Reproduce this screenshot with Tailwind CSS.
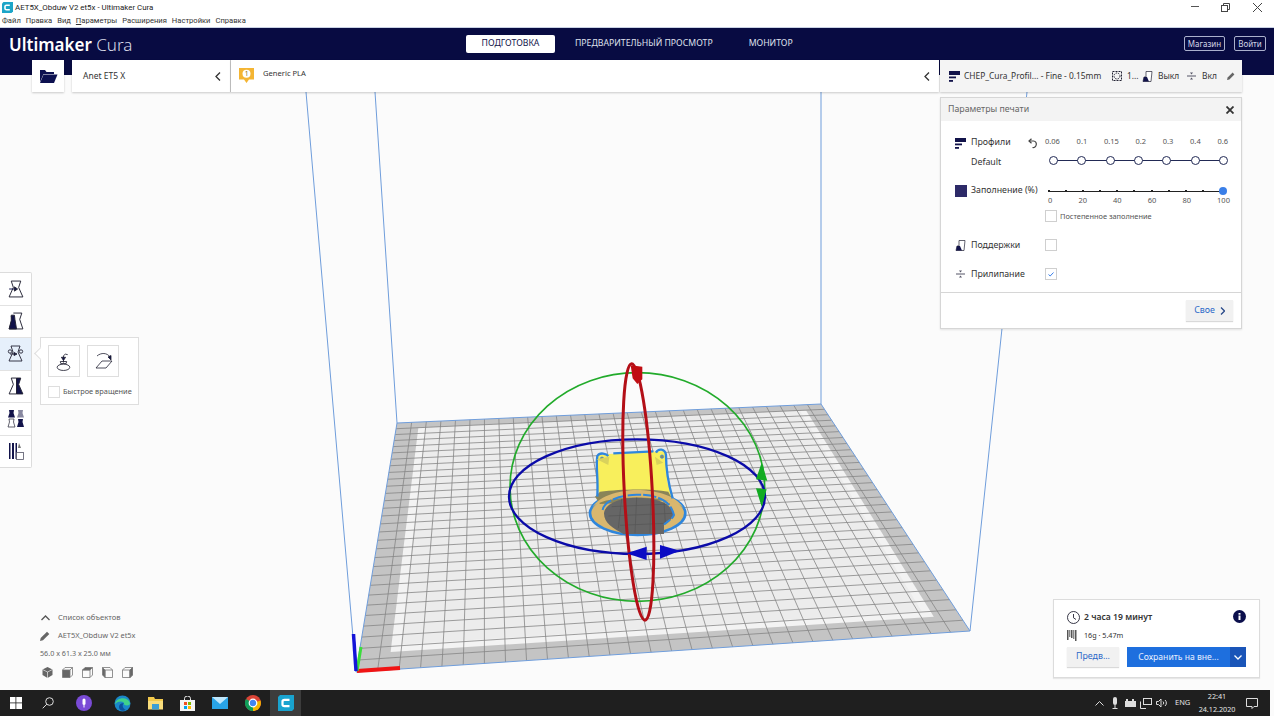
<!DOCTYPE html>
<html lang="ru">
<head>
<meta charset="UTF-8" />
<title>AET5X_Obduw V2 et5x - Ultimaker Cura</title>
<script src="https://cdn.jsdelivr.net/npm/@tailwindcss/browser@4"></script>
</head>
<body class="bg-white font-['Noto_Sans',sans-serif] overflow-hidden">
<div class="relative w-[1274px] h-[716px] overflow-hidden bg-[#fbfbfb] flex flex-col">

    <!-- 3d view -->
    <svg id="stage" class="absolute left-0 top-0" width="1274" height="716" viewBox="0 0 1274 716" fill="none">
        <g id="plate"></g>
        <g stroke="#6f9ddb" stroke-width="1">
            <line x1="356" y1="672" x2="306" y2="92"/>
            <line x1="397" y1="423" x2="375" y2="92"/>
            <line x1="821" y1="404" x2="821" y2="92"/>
            <line x1="970" y1="631" x2="1027" y2="92"/>
        </g>
        <!-- axes -->
        <g stroke-linecap="butt">
            <line x1="357" y1="671" x2="400" y2="668" stroke="#f01414" stroke-width="4"/>
            <line x1="357" y1="671" x2="361" y2="647" stroke="#3bdc3b" stroke-width="3"/>
            <line x1="356" y1="671" x2="353.500" y2="634" stroke="#1414d8" stroke-width="3.500"/>
        </g>
        <!-- model + rotate handles, numbers follow a 3x crop of the area -->
        <g transform="translate(480 350) scale(0.3333)">
            <ellipse cx="473" cy="490" rx="143" ry="65" fill="#d9b76e" stroke="#2f86dc" stroke-width="8"/>
            <path d="M352 315 L385 312 L520 305 L556 303 L562 395 L578 448 L360 445 L350 400Z" fill="#f8ef5c"/>
            <path d="M345 440 L360 425 C420 418 510 415 565 425 L578 450 L360 462Z" fill="#8a8458"/>
            <path d="M335 480 C345 440 420 420 470 420 C530 420 600 440 612 480 C600 430 340 430 335 480Z" fill="#d9b76e"/>
            <path d="M372 490 C375 460 420 443 470 443 C530 443 578 460 582 495 C575 510 560 518 552 522 L552 552 L430 552 C400 535 372 520 372 490Z" fill="#666666"/>
            <g stroke="#555" stroke-width="2">
                <path d="M395 470 L570 462 M385 498 L578 490 M420 526 L556 520"/>
                <path d="M425 447 L415 535 M470 443 L465 550 M512 446 L510 550 M552 452 L556 520"/>
            </g>
            <path d="M368 480 C372 452 420 436 470 434 C520 434 570 445 582 495 C575 510 560 516 552 524" stroke="#2f86dc" stroke-width="6" stroke-dasharray="40 6"/>
            <path d="M352 440 C355 380 347 350 352 318 C360 305 380 312 385 318 M400 310 L520 304 M528 308 C535 295 555 295 558 315 C558 350 562 390 578 445" stroke="#2f86dc" stroke-width="7"/>
            <circle cx="366" cy="326" r="5" fill="#8a8a60" stroke="#2f86dc" stroke-width="2"/>
            <circle cx="546" cy="320" r="5" fill="#8a8a60" stroke="#2f86dc" stroke-width="2"/>
            <path d="M350 328 L385 345 L388 320Z M525 320 L550 338 L530 345Z" fill="#d9d25c"/>
            <ellipse cx="472" cy="411" rx="382" ry="343" stroke="#22ab2b" stroke-width="5"/>
            <ellipse cx="471" cy="440" rx="384" ry="172" stroke="#0b0ba8" stroke-width="7"/>
            <ellipse cx="475" cy="426" rx="42" ry="385" transform="rotate(-3 475 426)" stroke="#b30f17" stroke-width="9"/>
            <path d="M452 46 L487 50 L487 88 L472 102 L458 85Z" fill="#c00d12"/>
            <path d="M845 338 L862 392 L828 388Z M828 415 L860 418 L845 470Z" fill="#12ab22"/>
            <path d="M500 590 L500 630 L440 610Z M540 585 L600 602 L540 626Z" fill="#0b0bc4"/>
        </g>
    </svg>

    <!-- window title -->
    <div class="relative h-[14px] flex items-center bg-white pl-[2px] font-['Roboto',sans-serif] text-[7.900px] text-[#222]">
        <svg class="mt-[1px]" width="11" height="11" viewBox="0 0 11 11"><path d="M1.500 0H11V9.500L9.500 11H0V1.500Z" fill="#1da5c8"/><path d="M7.800 3.200H4.500Q3 3.200 3 4.500V6.500Q3 7.800 4.500 7.800H7.800" stroke="#fff" stroke-width="1.600" fill="none"/></svg>
        <span class="ml-[2px] mt-[1px]">AET5X_Obduw V2 et5x - Ultimaker Cura</span>
        <div class="ml-auto flex items-center text-[#333]">
            <svg class="mr-[22px]" width="8" height="2"><rect width="8" height="1" y="0" fill="#555"/></svg>
            <svg class="mr-[23px]" width="9" height="9" viewBox="0 0 9 9" fill="none" stroke="#444"><rect x="0.500" y="2.500" width="6" height="6"/><path d="M2.500 2.500V.5H8.500V6.500H6.500"/></svg>
            <svg class="mr-[12px]" width="9" height="9" viewBox="0 0 9 9" stroke="#444"><path d="M0 0L9 9M9 0L0 9"/></svg>
        </div>
    </div>
    <div class="relative h-[14px] flex items-center gap-[5px] bg-white pl-[2px] font-['Roboto',sans-serif] text-[7.600px] text-[#333] border-b border-[#c9d2e4]">
        <span>Файл</span><span>Правка</span><span>Вид</span><span><u>П</u>араметры</span><span>Расширения</span><span>Настройки</span><span>Справка</span>
    </div>

    <!-- navy header -->
    <div class="relative h-[47px] bg-[#080b42] flex items-start pt-[7px] text-white">
        <div class="w-[466px] pl-[9px] text-[17px] leading-[20px] whitespace-nowrap"><span class="font-semibold">Ultimaker</span> <span class="font-light text-[#d9dbe8]">Cura</span></div>
        <div class="h-[18px] w-[89px] bg-white rounded-[2px] flex items-center justify-center text-[#12134a] text-[8.700px]">ПОДГОТОВКА</div>
        <div class="ml-[20px] h-[18px] flex items-center text-[8.700px] text-[#dfe0ec] whitespace-nowrap">ПРЕДВАРИТЕЛЬНЫЙ ПРОСМОТР</div>
        <div class="ml-[36px] h-[18px] flex items-center text-[8.700px] text-[#dfe0ec]">МОНИТОР</div>
        <div class="absolute left-[1184px] top-[8px] w-[41px] h-[15px] border border-[#aab0cc] rounded-[2px] flex items-center justify-center text-[8px] text-[#d4d6e6]">Магазин</div>
        <div class="absolute left-[1234px] top-[8px] w-[32px] h-[15px] border border-[#aab0cc] rounded-[2px] flex items-center justify-center text-[8px] text-[#d4d6e6]">Войти</div>
    </div>

    <!-- stage menu, hangs over the header -->
    <div class="relative -mt-[15px] ml-[32px] h-[32px] flex">
        <div class="w-[32px] h-[32px] bg-white shadow-[0_1px_2px_rgba(0,0,0,0.2)] flex items-center justify-center">
            <svg width="19" height="15" viewBox="0 0 19 15"><path d="M1 13V1H6L7.500 3H15V5H4.500Z" fill="#0d1150"/><path d="M1 14H15L18.500 5.500H4.500Z" fill="#0d1150"/></svg>
        </div>
        <div class="ml-[8px] w-[159px] bg-white flex items-center pl-[11px] text-[8.500px] text-[#333] shadow-[0_1px_2px_rgba(0,0,0,0.2)] border-r border-[#c8c8c8]">
            <span>Anet ET5 X</span>
            <svg class="ml-auto mr-[9px]" width="6" height="9" viewBox="0 0 6 9" fill="none" stroke="#333" stroke-width="1.300"><path d="M5 .5L1 4.500L5 8.500"/></svg>
        </div>
        <div class="w-[708px] bg-white flex items-start pl-[7px] text-[7.600px] text-[#333] shadow-[0_1px_2px_rgba(0,0,0,0.2)]">
            <svg class="mt-[7px]" width="17" height="17" viewBox="0 0 17 17"><path d="M1 1H16V12.500H11L8.500 16L6 12.500H1Z" fill="#f4b533"/><circle cx="8.500" cy="6.800" r="4" fill="#fff"/><text x="8.500" y="9.200" text-anchor="middle" font-size="6.500" fill="#8a6a10" font-family="Noto Sans">1</text></svg>
            <span class="ml-[8px] mt-[8px]">Generic PLA</span>
            <svg class="ml-auto mr-[9px] mt-[12px]" width="6" height="9" viewBox="0 0 6 9" fill="none" stroke="#333" stroke-width="1.300"><path d="M5 .5L1 4.500L5 8.500"/></svg>
        </div>
        <div class="ml-px w-[302px] bg-[#f4f4f4] flex items-center pl-[9px] text-[8.400px] text-[#333] shadow-[0_1px_2px_rgba(0,0,0,0.2)] whitespace-nowrap">
            <svg width="11" height="11" viewBox="0 0 11 11" fill="#12134a"><rect width="11" height="4"/><rect y="5.500" width="7" height="1.800"/><rect y="9" width="4" height="1.800"/></svg>
            <span class="ml-[4px] w-[148px]">CHEP_Cura_Profil... - Fine - 0.15mm</span>
            <svg width="10" height="10" viewBox="0 0 10 10" fill="none" stroke="#223" stroke-width="1"><rect x=".5" y=".5" width="9" height="9" stroke-dasharray="2 1"/><circle cx="5" cy="5" r="3" stroke-dasharray="1.500 1"/></svg>
            <span class="ml-[5px] w-[11px]">1...</span>
            <svg class="ml-[4px]" width="11" height="11" viewBox="0 0 11 11"><path d="M4 .5H10L9 10.500H1L2 6H4Z" fill="#fff" stroke="#223" stroke-width=".7"/><path d="M1 10.500L2 6H5L7 10.500Z" fill="#12134a"/></svg>
            <span class="ml-[5px] w-[22px]">Выкл</span>
            <svg class="ml-[7px]" width="9" height="10" viewBox="0 0 9 10" fill="#556"><rect y="4.500" width="9" height="1"/><path d="M4.500 3.500L3 1.500H6Z M4.500 6.500L3 8.500H6Z"/></svg>
            <span class="ml-[6px] w-[16px]">Вкл</span>
            <svg class="ml-[9px]" width="8" height="8" viewBox="0 0 8 8" fill="#666"><path d="M0 8L.6 5.600L5.600 .6L7.400 2.400L2.400 7.400Z"/></svg>
        </div>
    </div>

    <!-- print settings -->
    <div class="absolute left-[940px] top-[97px] w-[302px] h-[232px] bg-white border border-[#d6d6d6] shadow-[0_1px_2px_rgba(0,0,0,0.1)] flex flex-col text-[#333]">
        <div class="h-[23px] shrink-0 bg-[#f3f3f3] flex items-center justify-between px-[7px] text-[8.800px] text-[#666]">
            <span>Параметры печати</span>
            <svg width="8" height="8" viewBox="0 0 8 8" stroke="#333" stroke-width="1.800"><path d="M.5 .5L7.500 7.500M7.500 .5L.5 7.500"/></svg>
        </div>
        <div class="flex-1 relative pl-[14px] pt-[15px]">
            <div class="flex items-center h-[14px]">
                <svg class="w-[11px]" width="11" height="11" viewBox="0 0 11 11" fill="#12134a"><rect width="11" height="4"/><rect y="5.500" width="7" height="1.800"/><rect y="9" width="4" height="1.800"/></svg>
                <span class="ml-[5px] w-[56px] text-[8.800px]">Профили</span>
                <svg width="11" height="11" viewBox="0 0 11 11" fill="none" stroke="#444" stroke-width="1.200"><path d="M3 3H6.500A3.200 3.200 0 1 1 5.500 9.500"/><path d="M4.500 .8L2 3L4.500 5.200"/></svg>
                <div class="ml-[7px] w-[183px] flex justify-between text-[7.500px] text-[#555] -mt-[2px]">
                    <span>0.06</span><span>0.1</span><span>0.15</span><span>0.2</span><span>0.3</span><span>0.4</span><span>0.6</span>
                </div>
            </div>
            <div class="flex items-center h-[16px] mt-[5px]">
                <span class="ml-[16px] w-[78px] text-[8.800px]">Default</span>
                <div class="relative -mt-[6px] w-[179px] flex justify-between">
                    <div class="absolute left-[2px] right-[2px] top-[4px] h-[1.500px] bg-[#222a55]"></div>
                    <i class="relative w-[9px] h-[9px] rounded-full bg-white border border-[#222a55]"></i>
                    <i class="relative w-[9px] h-[9px] rounded-full bg-white border border-[#222a55]"></i>
                    <i class="relative w-[9px] h-[9px] rounded-full bg-white border border-[#222a55]"></i>
                    <i class="relative w-[9px] h-[9px] rounded-full bg-white border border-[#222a55]"></i>
                    <i class="relative w-[9px] h-[9px] rounded-full bg-white border border-[#222a55]"></i>
                    <i class="relative w-[9px] h-[9px] rounded-full bg-white border border-[#222a55]"></i>
                    <i class="relative w-[9px] h-[9px] rounded-full bg-white border border-[#222a55]"></i>
                </div>
            </div>
            <div class="flex items-center h-[14px] mt-[13px]">
                <div class="w-[12px] h-[12px] bg-[#2d2a68]"></div>
                <span class="ml-[4px] w-[77px] text-[8.800px] whitespace-nowrap">Заполнение (%)</span>
                <div class="relative w-[177px] h-[8px] flex justify-between items-center">
                    <div class="absolute left-0 right-0 top-[3.500px] h-px bg-[#222]"></div>
                    <i class="relative w-[2px] h-[2px] bg-[#222]"></i><i class="relative w-[2px] h-[2px] bg-[#222]"></i><i class="relative w-[2px] h-[2px] bg-[#222]"></i><i class="relative w-[2px] h-[2px] bg-[#222]"></i><i class="relative w-[2px] h-[2px] bg-[#222]"></i><i class="relative w-[2px] h-[2px] bg-[#222]"></i><i class="relative w-[2px] h-[2px] bg-[#222]"></i><i class="relative w-[2px] h-[2px] bg-[#222]"></i><i class="relative w-[2px] h-[2px] bg-[#222]"></i><i class="relative w-[2px] h-[2px] bg-[#222]"></i>
                    <i class="relative w-[8px] h-[8px] -mr-[2px] rounded-full bg-[#3a7fe8]"></i>
                </div>
            </div>
            <div class="ml-[93px] mt-[-3px] w-[182px] flex justify-between text-[7.500px] text-[#555]">
                <span>0</span><span>20</span><span>40</span><span>60</span><span>80</span><span>100</span>
            </div>
            <div class="ml-[90px] mt-[4px] flex items-center">
                <div class="w-[12px] h-[12px] border border-[#cfcfcf]"></div>
                <span class="ml-[3px] text-[7.400px] text-[#555] whitespace-nowrap">Постепенное заполнение</span>
            </div>
            <div class="flex items-center h-[12px] mt-[17px]">
                <svg class="w-[11px]" width="11" height="11" viewBox="0 0 11 11"><path d="M4 .5H10L9 10.500H1L2 6H4Z" fill="#fff" stroke="#223" stroke-width=".7"/><path d="M1 10.500L2 6H5L7 10.500Z" fill="#12134a"/></svg>
                <span class="ml-[5px] w-[74px] text-[8.800px]">Поддержки</span>
                <div class="w-[12px] h-[12px] border border-[#cfcfcf]"></div>
            </div>
            <div class="flex items-center h-[12px] mt-[17px]">
                <svg class="w-[11px]" width="9" height="10" viewBox="0 0 9 10" fill="#556"><rect y="4.500" width="9" height="1"/><path d="M4.500 3.500L3 1.500H6Z M4.500 6.500L3 8.500H6Z"/></svg>
                <span class="ml-[5px] w-[74px] text-[8.800px]">Прилипание</span>
                <div class="w-[12px] h-[12px] border border-[#cfcfcf] flex items-center justify-center">
                    <svg width="6" height="5" viewBox="0 0 6 5" fill="none" stroke="#3a7fe8" stroke-width="1"><path d="M.5 2.500L2.200 4L5.500 .5"/></svg>
                </div>
            </div>
            <div class="absolute left-0 right-0 bottom-[35px] h-px bg-[#d6d6d6]"></div>
            <div class="absolute right-[8px] bottom-[7px] w-[47px] h-[21px] bg-[#f1f1f1] shadow-[0_1px_1px_rgba(0,0,0,0.15)] flex items-center justify-center gap-[5px] text-[8.800px] text-[#2a68c8]">
                <span>Свое</span>
                <svg width="5" height="8" viewBox="0 0 5 8" fill="none" stroke="#2a4a8a" stroke-width="1.300"><path d="M1 .5L4.500 4L1 7.500"/></svg>
            </div>
        </div>
    </div>

    <!-- left toolbar -->
    <div class="absolute left-0 top-[272px] w-[32px] h-[196px] bg-white border border-l-0 border-[#dcdcdc] rounded-r-[2px] flex flex-col divide-y divide-[#e2e2e2]">
        <div class="flex-1 flex items-center justify-center">
            <svg width="16" height="18" viewBox="0 0 15 17" fill="none" stroke="#223" stroke-width=".9"><path d="M3 1H12L10 7L14 16H1L5 7Z"/><path d="M1 8.500H7" stroke="#12134a"/><path d="M6 6.500L9 8.500L6 10.500Z" fill="#12134a"/></svg>
        </div>
        <div class="flex-1 flex items-center justify-center">
            <svg width="16" height="18" viewBox="0 0 15 17" fill="none" stroke="#223" stroke-width=".9"><path d="M5 1H13L11 7L14 16H1L4 7L3 4"/><path d="M3 3H6L6.500 7L8 16H1L3 8Z" fill="#12134a"/></svg>
        </div>
        <div class="flex-1 flex items-center justify-center bg-[#e6f0fb]">
            <svg width="17" height="17" viewBox="0 0 17 17" fill="none" stroke="#223" stroke-width=".9"><path d="M4 1H13L11 7L15 16H2L6 7Z"/><circle cx="3" cy="6.500" r="1.700"/><circle cx="14" cy="6.500" r="1.700"/><path d="M3 9H8"/><path d="M7 7.500L10 9L7 10.500Z" fill="#12134a"/></svg>
        </div>
        <div class="flex-1 flex items-center justify-center">
            <svg width="16" height="18" viewBox="0 0 15 17" fill="none" stroke="#223" stroke-width=".9"><path d="M3 1H8V16H1L5 7Z"/><path d="M8 1H12L10 7L14 16H8Z" fill="#12134a"/></svg>
        </div>
        <div class="flex-1 flex items-center justify-center">
            <svg width="18" height="19" viewBox="0 0 17 19"><g fill="#12134a"><path d="M1.500 1H6.500L6 4L7.500 8.500H.5L2 4Z"/><path d="M10.500 10H15.500L15 13L16.500 18H9.500L11 13Z"/></g><path d="M10.500 1H15.500L15 4L16.500 8.500H9.500L11 4Z" fill="#8888a0"/><path d="M1.500 10H6.500L6 13L7.500 18H.5L2 13Z" fill="#fff" stroke="#223" stroke-width=".7"/></svg>
        </div>
        <div class="flex-1 flex items-center justify-center">
            <svg width="16" height="18" viewBox="0 0 16 18"><g fill="#12134a"><rect x="1" y="1" width="1.500" height="16"/><rect x="4" y="1" width="2" height="16"/><rect x="7.500" y="1" width="1.500" height="16"/></g><path d="M11 1L13 6H10Z" fill="#777"/><rect x="8.500" y="10.500" width="7" height="7" fill="#fff" stroke="#556" stroke-width=".8"/></svg>
        </div>
    </div>

    <!-- rotate popup -->
    <div class="absolute left-[40px] top-[337px] w-[99px] h-[68px] bg-white border border-[#dedede] flex flex-col pl-[7px] pt-[7px]">
        <div class="flex gap-[7px]">
            <div class="w-[32px] h-[32px] border border-[#dedede] flex items-center justify-center">
                <svg width="18" height="19" viewBox="0 0 17 18" fill="none" stroke="#223" stroke-width=".8"><path d="M5 9H11L10.500 11H5.500Z"/><ellipse cx="8" cy="14.500" rx="6" ry="3"/><path d="M8 10V3.500A3 3 0 0 1 12 2.500"/><path d="M6 5L8 8L10 5Z" fill="#12134a"/></svg>
            </div>
            <div class="w-[32px] h-[32px] border border-[#dedede] flex items-center justify-center">
                <svg width="19" height="18" viewBox="0 0 19 18" fill="none" stroke="#223" stroke-width=".8"><path d="M3 4C7 .5 13 .5 16 5"/><path d="M14 5L17 8L17 3.500Z" fill="#12134a"/><path d="M8 9H18L12 16H2Z"/></svg>
            </div>
        </div>
        <div class="flex items-center mt-[9px]">
            <div class="w-[12px] h-[12px] border border-[#dedede]"></div>
            <span class="ml-[3px] text-[7.400px] text-[#555] whitespace-nowrap">Быстрое вращение</span>
        </div>
    </div>
    <div class="absolute left-[35.500px] top-[349px] w-[9px] h-[9px] rotate-45 bg-white border-l border-b border-[#dedede]"></div>

    <!-- object list -->
    <div class="absolute left-[40px] top-[611px] w-[120px] text-[#666]">
        <div class="flex items-center h-[14px] text-[7.600px]">
            <svg class="ml-[1px]" width="9" height="6" viewBox="0 0 9 6" fill="none" stroke="#555" stroke-width="1.300"><path d="M.5 5L4.500 1L8.500 5"/></svg>
            <span class="ml-[8px] whitespace-nowrap">Список объектов</span>
        </div>
        <div class="flex items-center h-[14px] mt-[4px] text-[7.400px]">
            <svg width="10" height="10" viewBox="0 0 10 10" fill="#666"><path d="M0 10L.7 7L7 .7L9.300 3L3 9.300Z"/></svg>
            <span class="ml-[8px] whitespace-nowrap">AET5X_Obduw V2 et5x</span>
        </div>
        <div class="mt-[3px] h-[14px] flex items-center text-[7.200px] whitespace-nowrap">56.0 x 61.3 x 25.0 мм</div>
        <div class="mt-[7px] ml-[2px] flex gap-[9px]">
            <svg width="11" height="11" viewBox="0 0 11 11"><path d="M5.500 0L10.500 2.500V8L5.500 11L.5 8V2.500Z" fill="#666"/><path d="M.5 2.500L5.500 5L10.500 2.500M5.500 5V11" stroke="#fff" stroke-width=".6" fill="none"/></svg>
            <svg width="11" height="11" viewBox="0 0 11 11" fill="none" stroke="#777" stroke-width=".8"><path d="M.5 3H8V10.500H.5Z" fill="#666"/><path d="M.5 3L3 .5H10.500L8 3M10.500 .5V8L8 10.500"/></svg>
            <svg width="11" height="11" viewBox="0 0 11 11" fill="none" stroke="#777" stroke-width=".8"><path d="M.5 3H8V10.500H.5Z"/><path d="M.5 3L3 .5H10.500L8 3Z" fill="#666"/><path d="M10.500 .5V8L8 10.500"/></svg>
            <svg width="11" height="11" viewBox="0 0 11 11" fill="none" stroke="#777" stroke-width=".8"><path d="M.5 .5L3 3V10.500L.5 8Z" fill="#666"/><path d="M.5 .5H8L10.500 3V10.500H3V3H10.500"/></svg>
            <svg width="11" height="11" viewBox="0 0 11 11" fill="none" stroke="#777" stroke-width=".8"><path d="M.5 3H8V10.500H.5Z"/><path d="M.5 3L3 .5H10.500V8L8 10.500V3L10.500 .5" /><path d="M8 3L10.500 .5V8L8 10.500Z" fill="#666"/></svg>
        </div>
    </div>

    <!-- print estimate -->
    <div class="absolute left-[1053px] top-[599px] w-[207px] h-[79px] bg-white border border-[#dcdcdc] shadow-[0_1px_1px_rgba(0,0,0,0.08)] pl-[13px] pt-[10px] text-[#333]">
        <div class="flex items-center h-[14px]">
            <svg width="13" height="13" viewBox="0 0 13 13" fill="none" stroke="#223" stroke-width=".9"><circle cx="6.500" cy="6.500" r="6"/><path d="M6.500 3V6.800L9 8.500"/></svg>
            <span class="ml-[4px] text-[8.600px] font-semibold whitespace-nowrap">2 часа 19 минут</span>
        </div>
        <svg class="absolute left-[179px] top-[10px]" width="13" height="13" viewBox="0 0 13 13"><circle cx="6.500" cy="6.500" r="6.500" fill="#0b0f4c"/><rect x="5.500" y="5.500" width="2" height="4.500" fill="#fff"/><rect x="5.500" y="3" width="2" height="1.700" fill="#fff"/></svg>
        <div class="flex items-center h-[12px] mt-[5px]">
            <svg width="11" height="11" viewBox="0 0 11 11" fill="#555"><rect y="0" width="1.500" height="10"/><rect x="2.300" y="0" width="1" height="7"/><rect x="4" y="0" width="1.500" height="8"/><rect x="6.300" y="0" width="1" height="9"/><rect x="8" y="0" width="1.500" height="11"/></svg>
            <span class="ml-[6px] text-[7.200px] whitespace-nowrap">16g · 5.47m</span>
        </div>
        <div class="flex mt-[6px]">
            <div class="w-[52px] h-[20px] bg-[#f1f1f1] shadow-[0_1px_1px_rgba(0,0,0,0.15)] flex items-center justify-center text-[8.800px] text-[#2a68c8]">Предв...</div>
            <div class="ml-[8px] w-[103px] h-[20px] bg-[#1e6fde] flex items-center justify-center text-[8.600px] text-[#e8f0ff] whitespace-nowrap">Сохранить на вне...</div>
            <div class="w-[16px] h-[20px] bg-[#1a55b8] flex items-center justify-center">
                <svg width="8" height="5" viewBox="0 0 8 5" fill="none" stroke="#fff" stroke-width="1.300"><path d="M.5 .5L4 4L7.500 .5"/></svg>
            </div>
        </div>
    </div>

    <!-- taskbar -->
    <div class="absolute left-0 top-[690px] w-[1270px] h-[26px] bg-[#1f1f1f] flex items-center text-[#e6e6e6]">
        <svg class="ml-[10px]" width="12" height="12" viewBox="0 0 12 12" fill="#fff"><rect width="5.500" height="5.500"/><rect x="6.300" width="5.700" height="5.500"/><rect y="6.300" width="5.500" height="5.700"/><rect x="6.300" y="6.300" width="5.700" height="5.700"/></svg>
        <svg class="ml-[20px]" width="12" height="12" viewBox="0 0 12 12" fill="none" stroke="#ddd" stroke-width="1"><circle cx="7.500" cy="4.500" r="3.800"/><path d="M4.800 7.200L.7 11.300"/></svg>
        <svg class="ml-[22px]" width="16" height="16" viewBox="0 0 16 16"><circle cx="8" cy="8" r="8" fill="#7a4bd6"/><rect x="6.500" y="3.500" width="3" height="6.500" rx="1.500" fill="#fff"/><path d="M8 10V12.500" stroke="#fff"/></svg>
        <svg class="ml-[21.500px]" width="17" height="17" viewBox="0 0 17 17"><circle cx="8.500" cy="8.500" r="8" fill="#1a87c9"/><path d="M1 9C2 2 14 1 16 8C16 11 12 11 10 9.500C11 6 5 5 1 9Z" fill="#3fd08b"/><path d="M5 12C5 9 8 7.500 10 8.500C8 9 8 13 12 15C8 17 5 15 5 12Z" fill="#0c4f9c"/></svg>
        <svg class="ml-[17px]" width="15" height="14" viewBox="0 0 15 14"><path d="M0 1H6L7 3H15V13H0Z" fill="#f2c94c"/><rect y="5" width="15" height="8.500" fill="#f9dd7c"/><rect x="4" y="8" width="7" height="5.500" fill="#3d9fd6"/></svg>
        <svg class="ml-[17px]" width="15" height="15" viewBox="0 0 15 15"><path d="M0 4H15V15H0Z" fill="#f5f5f5"/><path d="M4.500 4V2.500A3 2.500 0 0 1 10.500 2.500V4" stroke="#eee" fill="none"/><rect x="4" y="6" width="3" height="3" fill="#f25022"/><rect x="8" y="6" width="3" height="3" fill="#7fba00"/><rect x="4" y="10" width="3" height="3" fill="#00a4ef"/><rect x="8" y="10" width="3" height="3" fill="#ffb900"/></svg>
        <svg class="ml-[17.500px]" width="16" height="12" viewBox="0 0 16 12"><rect width="16" height="12" fill="#29a3e6"/><path d="M0 0L8 7L16 0Z" fill="#bfe6fb"/></svg>
        <svg class="ml-[17px]" width="16" height="16" viewBox="0 0 16 16"><circle cx="8" cy="8" r="8" fill="#db4437"/><path d="M8 8L15.500 5.500A8 8 0 0 1 8 16Z" fill="#f4b400"/><path d="M8 8L8 16A8 8 0 0 1 1 4Z" fill="#0f9d58"/><circle cx="8" cy="8" r="3.800" fill="#4285f4" stroke="#fff" stroke-width="1.200"/></svg>
        <div class="ml-[9px] w-[31px] h-full bg-[#3c3c3c] flex items-center justify-center">
            <svg width="16" height="16" viewBox="0 0 16 16"><path d="M2 0H16V14L14 16H0V2Z" fill="#19a3cf"/><path d="M11.500 4.800H6.500Q4.500 4.800 4.500 6.500V9.500Q4.500 11.200 6.500 11.200H11.500" stroke="#fff" stroke-width="2.200" fill="none"/></svg>
        </div>
        <div class="ml-auto flex items-center pr-[12px]">
            <svg width="9" height="5" viewBox="0 0 9 5" fill="none" stroke="#ddd"><path d="M.5 4.500L4.500 .5L8.500 4.500"/></svg>
            <svg class="ml-[7.500px]" width="8" height="12" viewBox="0 0 8 12" fill="#ddd"><rect x="2" width="4" height="8" rx="2"/><rect x="3.500" y="8" width="1" height="3"/><rect x="1.500" y="11" width="5" height="1"/></svg>
            <svg class="ml-[6px]" width="12" height="8" viewBox="0 0 12 8" fill="#ddd"><rect y="2" width="11" height="6"/><rect x="1" y="0" width="2" height="2"/><rect x="7" y="0" width="2" height="2"/></svg>
            <svg class="ml-[3px]" width="12" height="11" viewBox="0 0 12 11" fill="none" stroke="#ddd"><rect x="3.500" y=".5" width="8" height="6"/><path d="M.5 3.500V10.500M.5 10.500H6"/></svg>
            <svg class="ml-[4px]" width="12" height="10" viewBox="0 0 12 10" fill="none" stroke="#ddd"><path d="M.5 3.500H2.500L5 1V9L2.500 6.500H.5Z"/><path d="M7 3.500A2 2 0 0 1 7 6.500M9 2A4 4 0 0 1 9 8"/></svg>
            <span class="ml-[7px] w-[16px] text-[7.500px] whitespace-nowrap">ENG</span>
            <div class="ml-[6px] w-[40px] flex flex-col items-center text-[7.200px] leading-[13px]"><span>22:41</span><span>24.12.2020</span></div>
            <svg class="ml-[9px]" width="12" height="11" viewBox="0 0 12 11" fill="none" stroke="#ddd"><path d="M.5 .5H11.500V8.500H8L6 10.500V8.500H.5Z"/></svg>
        </div>
    </div>
</div>

<script>
    // bed corners as seen on screen: far left, far right, near right, near left
    function homography(p) {
        const [a, b, c, d] = p;
        const dx1 = b[0] - c[0], dx2 = d[0] - c[0], sx = a[0] - b[0] + c[0] - d[0];
        const dy1 = b[1] - c[1], dy2 = d[1] - c[1], sy = a[1] - b[1] + c[1] - d[1];
        const den = dx1 * dy2 - dx2 * dy1;
        const g = (sx * dy2 - dx2 * sy) / den, h = (dx1 * sy - sx * dy1) / den;
        const m = [b[0] - a[0] + g * b[0], d[0] - a[0] + h * d[0], a[0], b[1] - a[1] + g * b[1], d[1] - a[1] + h * d[1], a[1], g, h];
        return (u, v) => {
            const w = m[6] * u + m[7] * v + 1;
            return [(m[0] * u + m[1] * v + m[2]) / w, (m[3] * u + m[4] * v + m[5]) / w];
        };
    }
    const map = homography([[397, 423], [821, 404], [970, 631], [356, 672]]);
    const quad = (u0, v0, u1, v1) => [map(u0, v0), map(u1, v0), map(u1, v1), map(u0, v1)].map(q => q.map(n => n.toFixed(1)).join(',')).join(' ');
    let svg = '';
    svg += `<polygon points="${quad(0, 0, 1, 1)}" fill="#c4c4c4"/>`;
    svg += `<polygon points="${quad(0.05, 0.035, 0.955, 0.95)}" fill="#f3f3f3"/>`;
    svg += `<polygon points="${quad(0.065, 0.035, 0.94, 0.93)}" fill="#ececec"/>`;
    const count = 30;
    for (let i = 1; i < count; i++) {
        const t = i / count;
        const a = map(t, 0), b = map(t, 1), c = map(0, t), d = map(1, t);
        svg += `<line x1="${a[0]}" y1="${a[1]}" x2="${b[0]}" y2="${b[1]}" stroke="#858585" stroke-width="0.8"/>`;
        svg += `<line x1="${c[0]}" y1="${c[1]}" x2="${d[0]}" y2="${d[1]}" stroke="#858585" stroke-width="0.8"/>`;
    }
    svg += `<polygon points="${quad(0, 0, 1, 1)}" fill="none" stroke="#6f9ddb" stroke-width="1"/>`;
    document.getElementById('plate').innerHTML = svg;
</script>
</body>
</html>
